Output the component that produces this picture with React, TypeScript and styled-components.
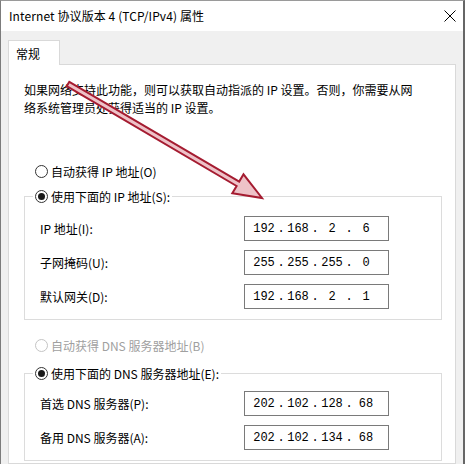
import React from 'react'
import styled, { createGlobalStyle } from 'styled-components'

const GlobalStyle = createGlobalStyle`
    html, body {
        margin: 0;
        padding: 0;
        background: #fff;
    }
    body {
        font-family: "Noto Sans CJK SC", "Noto Sans", sans-serif;
        font-size: 12px;
        color: #000;
    }
`

const ipRows = [
    { label: 'IP 地址(I):', value: ['192', '168', '2', '6'] },
    { label: '子网掩码(U):', value: ['255', '255', '255', '0'] },
    { label: '默认网关(D):', value: ['192', '168', '2', '1'] },
]

const dnsRows = [
    { label: '首选 DNS 服务器(P):', value: ['202', '102', '128', '68'] },
    { label: '备用 DNS 服务器(A):', value: ['202', '102', '134', '68'] },
]

const IpField = ({ value }: { value: string[] }) => (
    <IpBox>
        {value.map((octet, i) => (
            <React.Fragment key={i}>
                {i > 0 && <Dot>.</Dot>}
                <Octet>{octet}</Octet>
            </React.Fragment>
        ))}
    </IpBox>
)

const Radio = ({
    label,
    checked,
    disabled,
    indent,
}: {
    label: string
    checked?: boolean
    disabled?: boolean
    indent?: boolean
}) => (
    <RadioRow $indent={indent} $disabled={disabled}>
        <RadioCircle $checked={checked} $disabled={disabled} />
        <span>{label}</span>
    </RadioRow>
)

export default function App() {
    return (
        <>
            <GlobalStyle />
            <Window>
                <TitleBar>
                    <Title>Internet 协议版本 4 (TCP/IPv4) 属性</Title>
                    <svg width="12" height="12" viewBox="0 0 12 12">
                        <path d="M0.5 0.5 L11.5 11.5 M11.5 0.5 L0.5 11.5" stroke="#000" strokeWidth="1" />
                    </svg>
                </TitleBar>
                <Body>
                    <Tabs>
                        <Tab>常规</Tab>
                    </Tabs>
                    <Panel>
                        <Description>
                            如果网络支持此功能，则可以获取自动指派的 IP 设置。否则，你需要从网
                            <br />
                            络系统管理员处获得适当的 IP 设置。
                        </Description>

                        <Radio label="自动获得 IP 地址(O)" indent />
                        <GroupBox $top={5}>
                            <Legend>
                                <Radio label="使用下面的 IP 地址(S):" checked />
                            </Legend>
                            <Rows $padTop={10}>
                                {ipRows.map(row => (
                                    <React.Fragment key={row.label}>
                                        <FieldLabel>{row.label}</FieldLabel>
                                        <IpField value={row.value} />
                                    </React.Fragment>
                                ))}
                            </Rows>
                        </GroupBox>

                        <Spacer $h={15} />
                        <Radio label="自动获得 DNS 服务器地址(B)" indent disabled />
                        <GroupBox $top={8}>
                            <Legend>
                                <Radio label="使用下面的 DNS 服务器地址(E):" checked />
                            </Legend>
                            <Rows $padTop={8}>
                                {dnsRows.map(row => (
                                    <React.Fragment key={row.label}>
                                        <FieldLabel>{row.label}</FieldLabel>
                                        <IpField value={row.value} />
                                    </React.Fragment>
                                ))}
                            </Rows>
                        </GroupBox>
                    </Panel>
                </Body>

                {/* red annotation arrow drawn over the dialog */}
                <Arrow viewBox="0 0 465 464" width="465" height="464">
                    <polygon
                        points="69.3,81.8 239.2,181.6 243.5,174.3 262,198 232.3,193.3 236.6,186 66.7,86.2"
                        fill="#eec2c8"
                        stroke="#a51c31"
                        strokeWidth="2"
                        strokeLinejoin="miter"
                    />
                </Arrow>
            </Window>
        </>
    )
}

const Window = styled.div`
    position: relative;
    width: 465px;
    height: 464px;
    box-sizing: border-box;
    border-top: 1px solid #9a9a9a;
    border-left: 1px solid #7c7c7c;
    border-right: 2px solid #666;
    background: #f0f0f0;
    overflow: hidden;
    display: flex;
    flex-direction: column;
`

const TitleBar = styled.div`
    flex: none;
    height: 30px;
    background: #fff;
    display: flex;
    align-items: center;
    justify-content: space-between;
    padding: 0 7px 0 8px;
`

const Title = styled.span`
    line-height: 16px;
    white-space: nowrap;
    letter-spacing: 0.1px;
`

const Body = styled.div`
    flex: 1;
    min-height: 0;
    display: flex;
    flex-direction: column;
    padding: 9px 7px 0 7px;
`

const Tabs = styled.div`
    display: flex;
    position: relative;
    z-index: 1;
    margin-bottom: -1px;
`

const Tab = styled.div`
    width: 52px;
    height: 25px;
    box-sizing: border-box;
    border: 1px solid #d9d9d9;
    border-bottom: none;
    background: #fff;
    padding-left: 7px;
    display: flex;
    align-items: center;
`

const Panel = styled.div`
    flex: 1;
    min-height: 0;
    background: #fff;
    border: 1px solid #d9d9d9;
    padding: 16px 13px 0 15px;
    display: flex;
    flex-direction: column;
`

const Description = styled.p`
    margin: 0 0 44px;
    line-height: 18px;
    white-space: nowrap;
`

const RadioRow = styled.div<{ $indent?: boolean; $disabled?: boolean }>`
    height: 20px;
    display: flex;
    align-items: center;
    gap: 3px;
    padding-left: ${p => (p.$indent ? 11 : 0)}px;
    color: ${p => (p.$disabled ? '#a0a0a0' : '#000')};
    white-space: nowrap;
`

const RadioCircle = styled.span<{ $checked?: boolean; $disabled?: boolean }>`
    width: 13px;
    height: 13px;
    box-sizing: border-box;
    border-radius: 50%;
    border: 1px solid ${p => (p.$disabled ? '#c4c4c4' : '#333')};
    background: #fff;
    display: flex;
    align-items: center;
    justify-content: center;

    &::after {
        content: '';
        display: ${p => (p.$checked ? 'block' : 'none')};
        width: 7px;
        height: 7px;
        border-radius: 50%;
        background: #1a1a1a;
    }
`

const GroupBox = styled.fieldset<{ $top: number }>`
    margin: ${p => p.$top}px 0 0;
    padding: 0;
    border: 1px solid #dcdcdc;
    min-inline-size: auto;
`

const Legend = styled.legend`
    margin-left: 8px;
    padding: 0 2px;
`

const Rows = styled.div<{ $padTop: number }>`
    display: grid;
    grid-template-columns: 1fr 145px;
    grid-auto-rows: 25px;
    row-gap: 9px;
    align-items: center;
    padding: ${p => p.$padTop}px 52px 10px 15px;
`

const FieldLabel = styled.span`
    white-space: nowrap;
`

const IpBox = styled.div`
    height: 25px;
    box-sizing: border-box;
    border: 1px solid #7a7a7a;
    background: #fff;
    display: flex;
    align-items: center;
    padding-left: 7px;
    font-family: "Liberation Mono", "DejaVu Sans Mono", monospace;
    font-size: 12px;
`

const Octet = styled.span`
    width: 24px;
    text-align: center;
`

const Dot = styled.span`
    width: 10px;
    text-align: center;
`

const Spacer = styled.div<{ $h: number }>`
    flex: none;
    height: ${p => p.$h}px;
`

const Arrow = styled.svg`
    position: absolute;
    top: -1px;
    left: -1px;
    pointer-events: none;
`
